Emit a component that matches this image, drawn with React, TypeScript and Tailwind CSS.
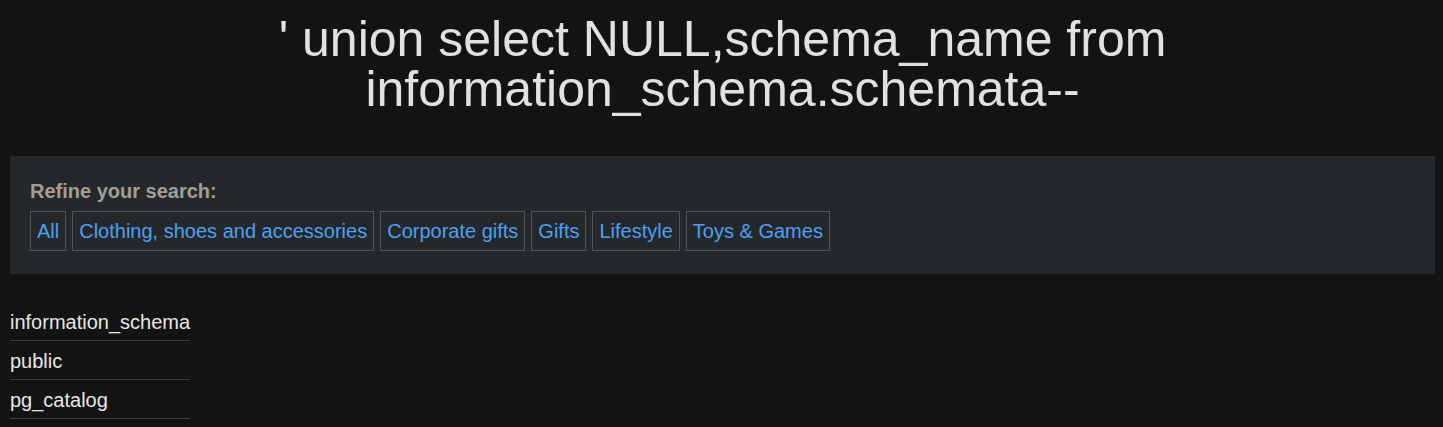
const CATEGORIES = [
  "All",
  "Clothing, shoes and accessories",
  "Corporate gifts",
  "Gifts",
  "Lifestyle",
  "Toys & Games",
];

const ROWS = ["information_schema", "public", "pg_catalog"];

export default function App() {
  return (
    <div className="min-h-[427px] bg-[#131313] pl-[10px] pr-[8px] pt-[14px] font-['Liberation_Sans',Arial,sans-serif]">
      <h1 className="mx-auto max-w-[1000px] text-center text-[50px] leading-[50px] text-[#e3e1dd]">
        ' union select NULL,schema_name from information_schema.schemata--
      </h1>

      <section className="mt-[42px] bg-[#25282a] px-[20px] pb-[23px] pt-[22px]">
        <p className="text-[20px] font-bold leading-[26px] text-[#a39e96]">
          Refine your search:
        </p>
        <div className="mt-[7px] flex flex-wrap gap-[6px]">
          {CATEGORIES.map((cat) => (
            <a
              key={cat}
              href="#"
              className="border border-[#545454] px-[6px] py-[7px] text-[20px] leading-[24px] text-[#4ca0f2]"
            >
              {cat}
            </a>
          ))}
        </div>
      </section>

      <table className="mt-[28px] border-collapse">
        <tbody>
          {ROWS.map((row) => (
            <tr key={row} className="border-b border-[#3e3e3e]">
              <td className="pb-[6px] pt-[8px] text-[20px] leading-[24px] text-[#e8e6e3]">{row}</td>
            </tr>
          ))}
        </tbody>
      </table>
    </div>
  );
}
